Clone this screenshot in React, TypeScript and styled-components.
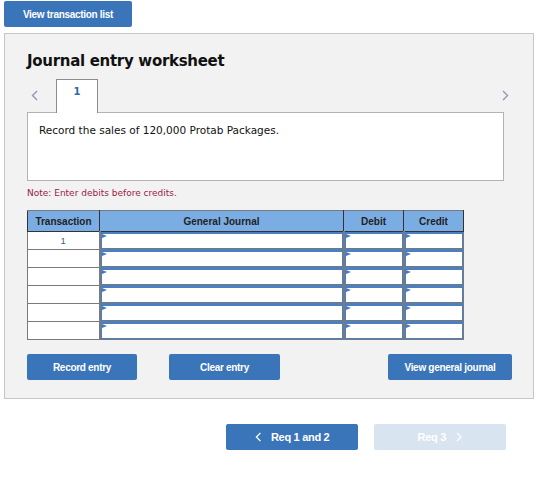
import * as React from 'react';
import styled, { createGlobalStyle } from 'styled-components';

const GlobalStyle = createGlobalStyle`
  body {
    margin: 0;
    background: #ffffff;
    font-family: "DejaVu Sans", sans-serif;
  }
`;

const blue = '#3a75b9';

const Page = styled.div`
  width: 530px;
  padding: 1px 0 0 4px;
`;

const Button = styled.button<{ $w: number; $size?: number }>`
  width: ${(p) => p.$w}px;
  height: 26px;
  border: none;
  border-radius: 2px;
  background: ${blue};
  color: #ffffff;
  font-family: "Liberation Sans", Arial, sans-serif;
  font-weight: bold;
  font-size: ${(p) => p.$size ?? 10}px;
  letter-spacing: -0.3px;
  padding: 0;
  display: flex;
  align-items: center;
  justify-content: center;
  gap: 10px;
  cursor: pointer;
`;

const DisabledButton = styled(Button)`
  background: #d9e4f1;
  cursor: default;
`;

const Panel = styled.div`
  box-sizing: border-box;
  width: 530px;
  margin-top: 6px;
  background: #f2f2f2;
  border: 1px solid #c6c6c6;
  padding: 18px 21px 18px 22px;
`;

const Title = styled.h2`
  margin: 0;
  font-size: 15px;
  line-height: 18px;
  letter-spacing: -0.3px;
  font-weight: bold;
  color: #111111;
`;

const TabRow = styled.div`
  display: flex;
  align-items: flex-end;
  height: 33px;
  margin-top: 9px;
  width: 486px;
`;

const Chevron = styled.span`
  display: flex;
  align-items: center;
  height: 33px;
  padding: 0 4px;
`;

const Tab = styled.div`
  box-sizing: border-box;
  width: 42px;
  height: 34px;
  margin: 0 0 -1px 14px;
  background: #ffffff;
  border: 1px solid #8c8c8c;
  border-bottom: none;
  display: flex;
  justify-content: center;
  padding-top: 6px;
  font-size: 10px;
  font-weight: bold;
  color: #2d6aa5;
  position: relative;
  z-index: 1;
`;

const Spacer = styled.div`
  flex: 1;
`;

const Prompt = styled.div`
  box-sizing: border-box;
  width: 477px;
  height: 69px;
  background: #ffffff;
  border: 1px solid #b3b3b3;
  padding: 11px 11px;
  font-size: 10.5px;
  color: #111111;
`;

const Note = styled.p`
  margin: 7px 0 0;
  font-size: 9px;
  color: #9b1c45;
`;

const Table = styled.table`
  margin-top: 12px;
  border-collapse: collapse;
  border: 1px solid #7a7a7a;
  font-family: "Liberation Sans", Arial, sans-serif;
`;

const Th = styled.th<{ $w: number }>`
  width: ${(p) => p.$w}px;
  height: 20px;
  padding: 0;
  background: #7aade3;
  border: 1px solid #333333;
  border-top-color: #7a7a7a;
  font-size: 10px;
  font-weight: bold;
  color: #222222;
`;

const TxCell = styled.td`
  height: 17px;
  padding: 0;
  background: #ffffff;
  border: 1px solid #7a7a7a;
  text-align: center;
  font-size: 9.5px;
  color: #3d5f88;
`;

const InputCell = styled.td`
  height: 17px;
  padding: 0;
  border: 1px solid #7a7a7a;
  border-left-width: 2px;
`;

const Field = styled.div`
  box-sizing: border-box;
  height: 17px;
  background: #ffffff;
  border: 1px solid #4b7fc3;
  border-width: 2px 1px 1px 1px;
  position: relative;

  &::before {
    content: '';
    position: absolute;
    left: 0;
    top: 0;
    border-left: 5px solid #3f7bc4;
    border-top: 2.5px solid transparent;
    border-bottom: 2.5px solid transparent;
  }
`;

const Actions = styled.div`
  display: flex;
  align-items: center;
  margin-top: 14px;
  width: 485px;
`;

const BottomNav = styled.div`
  display: flex;
  gap: 16px;
  margin: 25px 0 0 222px;
`;

const ChevronIcon: React.FC<{ dir: 'left' | 'right'; color?: string; size?: number }> = ({
  dir,
  color = '#8c9cb2',
  size = 11,
}) => (
  <svg width={size * 0.64} height={size} viewBox="0 0 7 11" fill="none">
    <polyline
      points={dir === 'left' ? '6,1 1.5,5.5 6,10' : '1,1 5.5,5.5 1,10'}
      stroke={color}
      strokeWidth={1.4}
    />
  </svg>
);

const rows = [0, 1, 2, 3, 4, 5];

export default function App() {
  return (
    <Page>
      <GlobalStyle />
      <Button $w={128}>View transaction list</Button>
      <Panel>
        <Title>Journal entry worksheet</Title>
        <TabRow>
          <Chevron>
            <ChevronIcon dir="left" />
          </Chevron>
          <Tab>1</Tab>
          <Spacer />
          <Chevron>
            <ChevronIcon dir="right" />
          </Chevron>
        </TabRow>
        <Prompt>Record the sales of 120,000 Protab Packages.</Prompt>
        <Note>Note: Enter debits before credits.</Note>
        <Table>
          <thead>
            <tr>
              <Th $w={71}>Transaction</Th>
              <Th $w={243}>General Journal</Th>
              <Th $w={59}>Debit</Th>
              <Th $w={59}>Credit</Th>
            </tr>
          </thead>
          <tbody>
            {rows.map((r) => (
              <tr key={r}>
                <TxCell>{r === 0 ? '1' : ''}</TxCell>
                <InputCell>
                  <Field />
                </InputCell>
                <InputCell>
                  <Field />
                </InputCell>
                <InputCell>
                  <Field />
                </InputCell>
              </tr>
            ))}
          </tbody>
        </Table>
        <Actions>
          <Button $w={110}>Record entry</Button>
          <Button $w={111} style={{ marginLeft: 32 }}>
            Clear entry
          </Button>
          <Spacer />
          <Button $w={124}>View general journal</Button>
        </Actions>
      </Panel>
      <BottomNav>
        <Button $w={132} $size={11}>
          <ChevronIcon dir="left" color="#ffffff" size={10} />
          Req 1 and 2
        </Button>
        <DisabledButton $w={132} $size={11}>
          Req 3
          <ChevronIcon dir="right" color="#ffffff" size={10} />
        </DisabledButton>
      </BottomNav>
    </Page>
  );
}
